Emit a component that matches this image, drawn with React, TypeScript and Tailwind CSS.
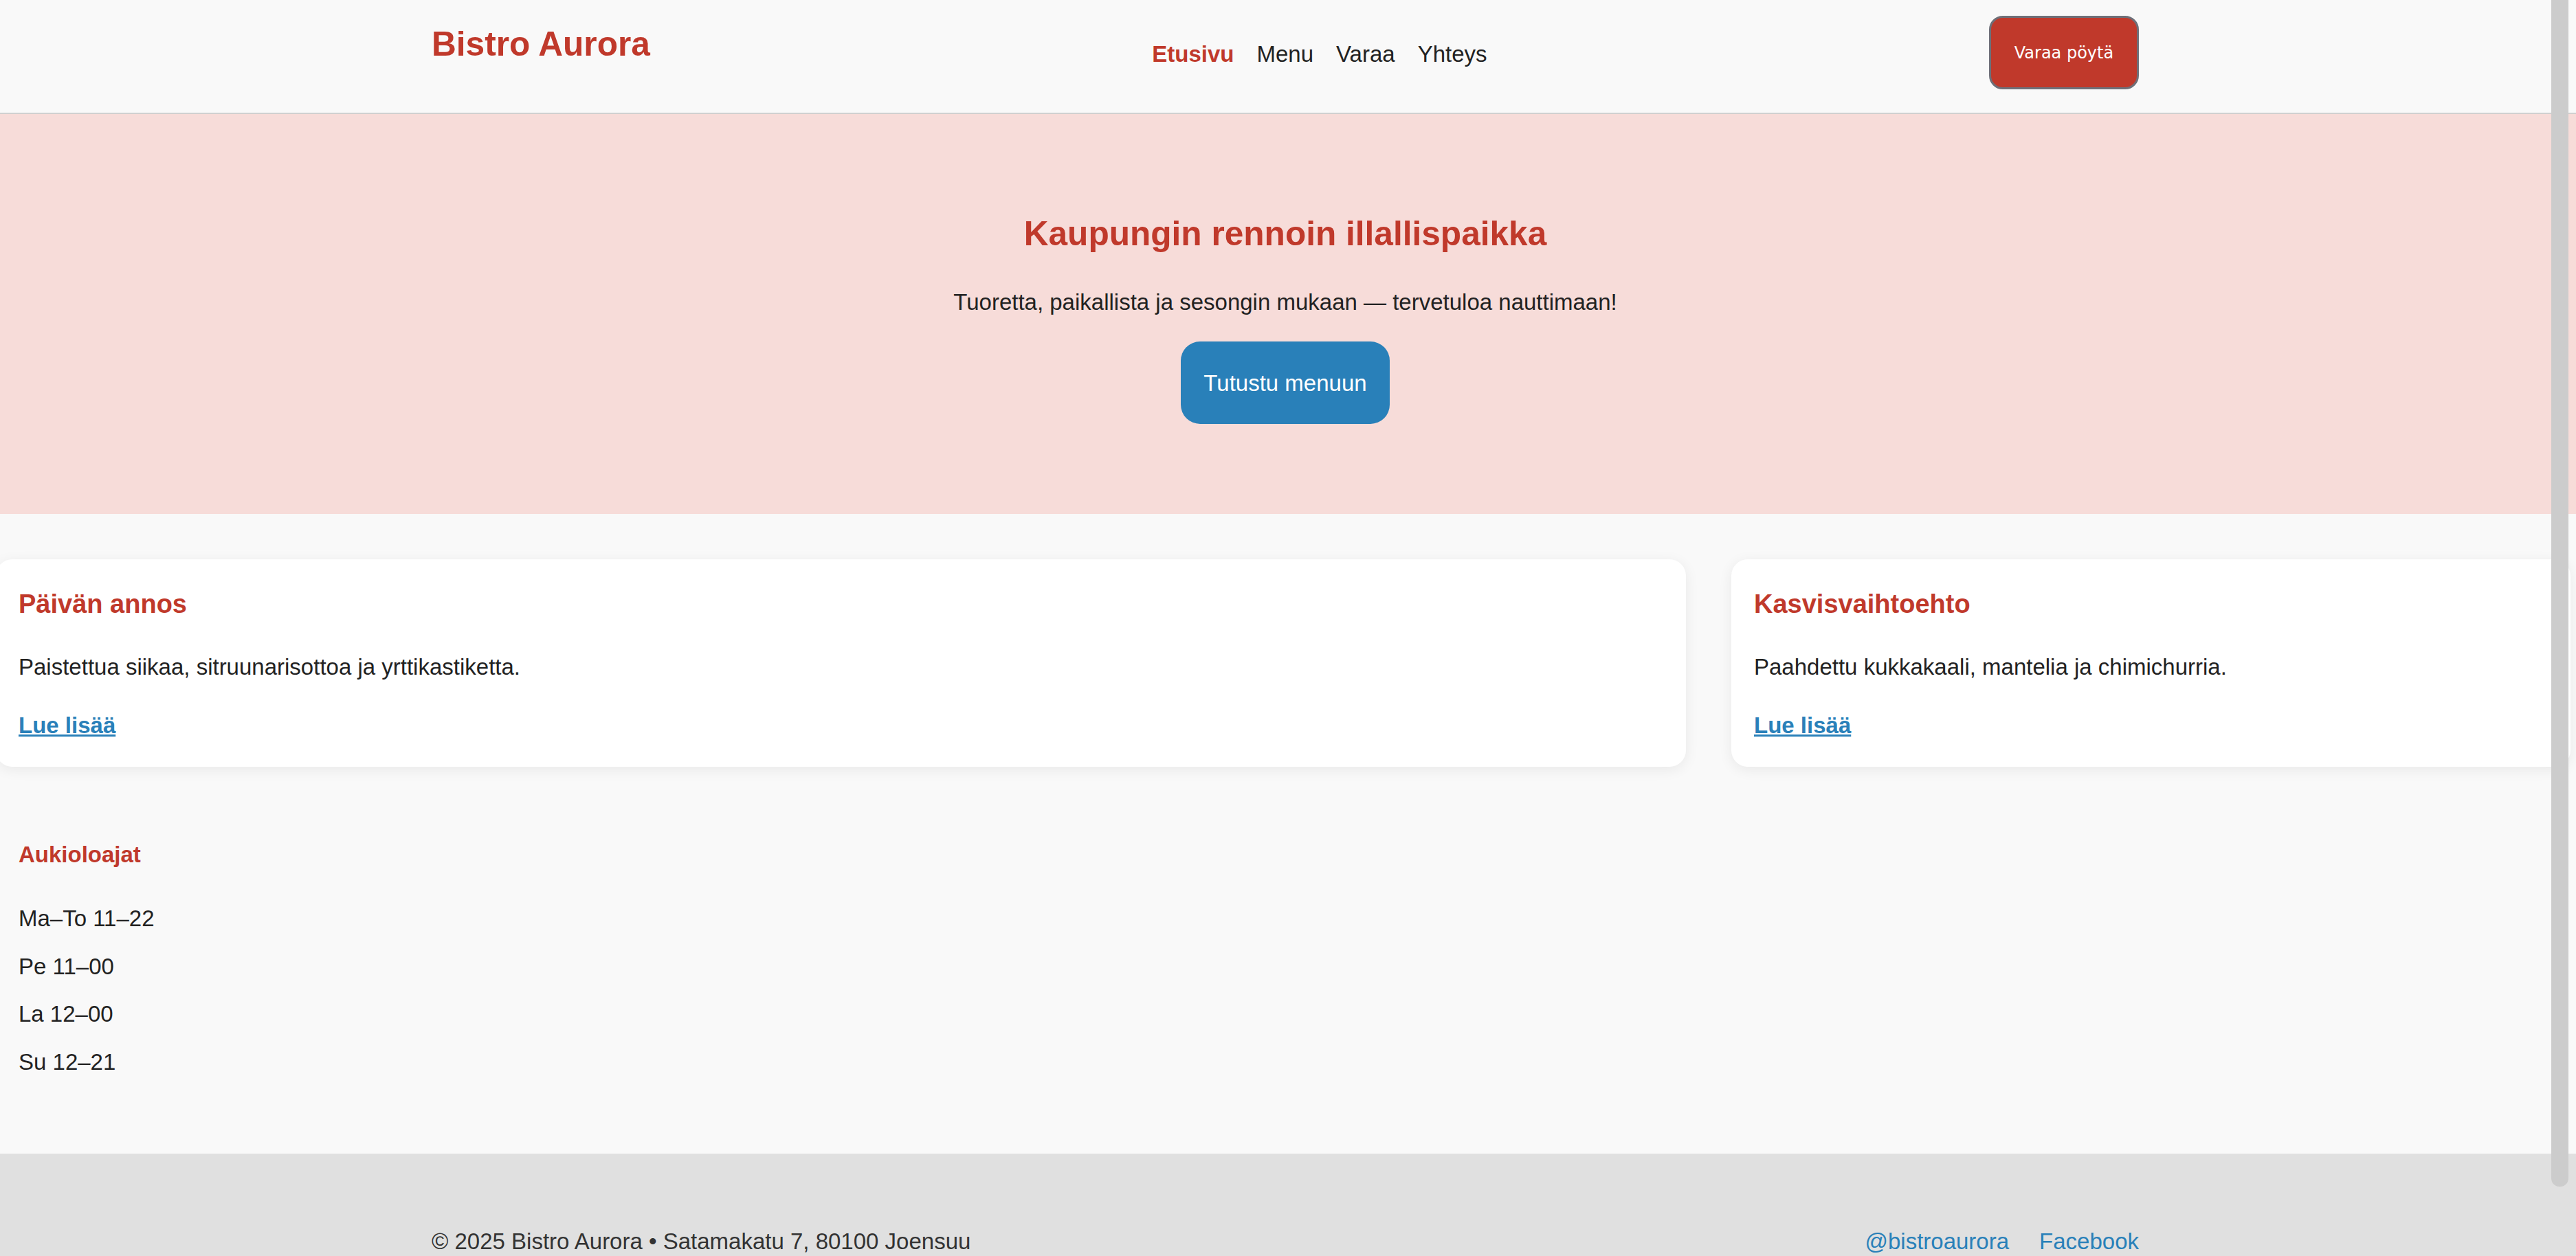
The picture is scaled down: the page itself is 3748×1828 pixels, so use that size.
import React from 'react';

const navLinks = [
  { name: 'Etusivu', active: true },
  { name: 'Menu', active: false },
  { name: 'Varaa', active: false },
  { name: 'Yhteys', active: false },
];

const dishes = [
  { title: 'Päivän annos', text: 'Paistettua siikaa, sitruunarisottoa ja yrttikastiketta.' },
  { title: 'Kasvisvaihtoehto', text: 'Paahdettu kukkakaali, mantelia ja chimichurria.' },
];

const hours = ['Ma–To 11–22', 'Pe 11–00', 'La 12–00', 'Su 12–21'];

export default function App() {
  return (
    <div className="relative h-[1828px] overflow-hidden bg-[#f9f9f9] text-[#222] font-['Liberation_Sans',Arial,sans-serif]">
      {/* Header */}
      <header className="h-[166px] border-b-2 border-[#d0d0d0] bg-[#f9f9f9] pr-[8px]">
        <div className="mx-auto flex w-[2484px] items-start justify-between">
          <div className="mt-[25px] text-[49.6px] font-bold leading-[79px] text-[#c0392b]">Bistro Aurora</div>
          <nav className="mt-[52px] flex gap-[33px] text-[33px] leading-[53px]">
            {navLinks.map((item) => (
              <a
                key={item.name}
                href="#"
                className={item.active ? 'font-bold text-[#c0392b]' : 'text-[#222]'}
              >
                {item.name}
              </a>
            ))}
          </nav>
          <button className="mt-[23px] flex h-[107px] w-[218px] items-center justify-center rounded-[20px] border-[3px] border-[#6e6f78] bg-[#c0392b] font-['DejaVu_Sans',sans-serif] text-[24px] text-white">
            Varaa pöytä
          </button>
        </div>
      </header>

      {/* Hero */}
      <section className="bg-[#f7dcd9] pb-[131px] pr-[8px] pt-[135px] text-center">
        <h1 className="text-[49.6px] font-bold leading-[79px] text-[#c0392b]">Kaupungin rennoin illallispaikka</h1>
        <p className="mt-[33px] text-[33px] leading-[53px]">
          Tuoretta, paikallista ja sesongin mukaan — tervetuloa nauttimaan!
        </p>
        <a
          href="#"
          className="mt-[31px] inline-block rounded-[28px] bg-[#2980b9] px-[33px] py-[33.5px] text-[33px] leading-[53px] text-white"
        >
          Tutustu menuun
        </a>
      </section>

      {/* Dishes */}
      <main className="pr-[8px]">
        <div className="ml-[-6px] mt-[66px] grid grid-cols-[2459px_1fr] gap-[66px]">
          {dishes.map((d) => (
            <div
              key={d.title}
              className="rounded-[24px] bg-white px-[33px] pb-[34px] pt-[35px] shadow-[0_4px_20px_rgba(0,0,0,0.07)]"
            >
              <h3 className="text-[38px] font-bold leading-[61px] text-[#c0392b]">{d.title}</h3>
              <p className="mt-[34px] text-[33px] leading-[53px]">{d.text}</p>
              <a href="#" className="mt-[32px] block w-fit text-[33px] font-bold leading-[53px] text-[#2980b9] underline">
                Lue lisää
              </a>
            </div>
          ))}
        </div>

        {/* Opening hours */}
        <div className="mb-[107.5px] ml-[-6px] mt-[101px] px-[33px]">
          <h4 className="text-[33px] font-bold leading-[53px] text-[#c0392b]">Aukioloajat</h4>
          <ul className="mt-[40px] flex flex-col gap-[16.5px] text-[33px] leading-[53px]">
            {hours.map((h) => (
              <li key={h}>{h}</li>
            ))}
          </ul>
        </div>
      </main>

      {/* Footer */}
      <footer className="bg-[#e0e0e0] pb-[97px] pr-[8px] pt-[101px]">
        <div className="mx-auto flex w-[2484px] justify-between text-[33px] leading-[53px]">
          <p className="text-[#333]">© 2025 Bistro Aurora • Satamakatu 7, 80100 Joensuu</p>
          <div className="flex gap-[44px] text-[#2980b9]">
            <a href="#">@bistroaurora</a>
            <a href="#">Facebook</a>
          </div>
        </div>
      </footer>

      {/* overlay scrollbar */}
      <div className="absolute right-[11px] top-0 h-[1727px] w-[25px] rounded-b-[12px] bg-[#cccccc]" />
    </div>
  );
}
